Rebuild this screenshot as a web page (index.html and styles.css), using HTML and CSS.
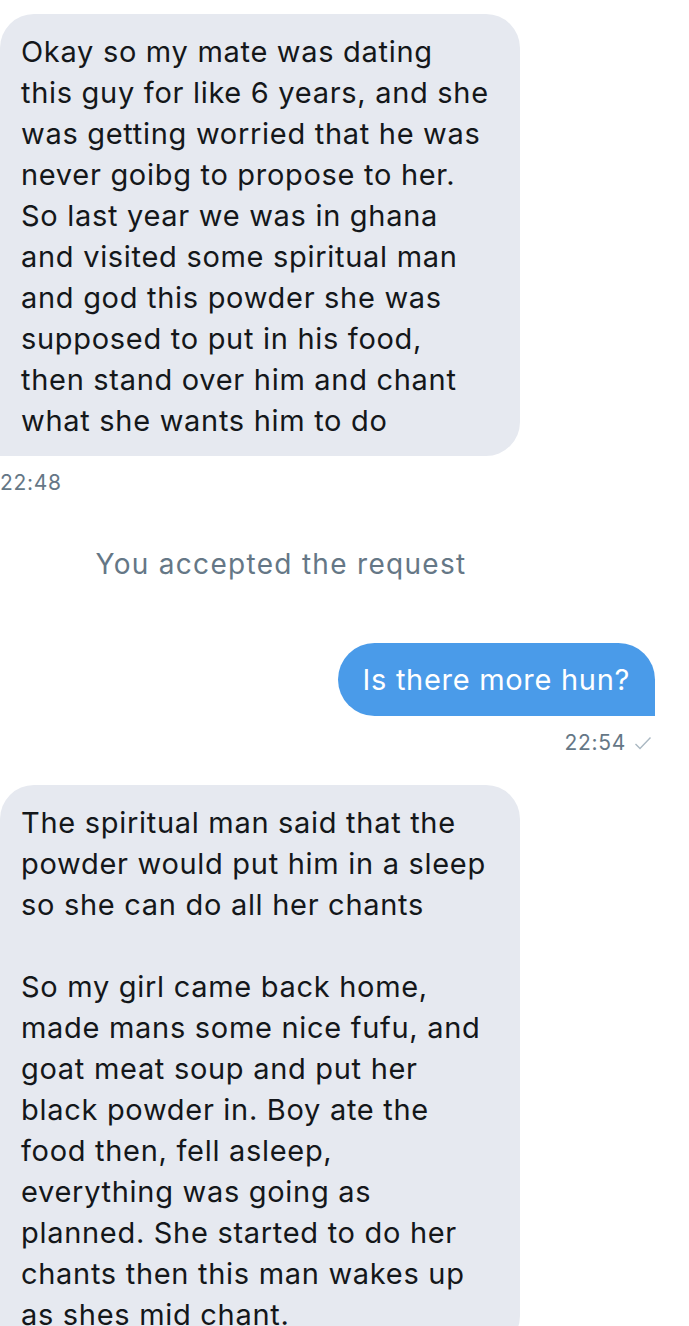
FILE: index.html
```html
<!DOCTYPE html>
<html>
<head>
<meta charset="utf-8">
<link rel="stylesheet" href="styles.css">
</head>
<body>
<div class="chat">
  <div class="msg in">
    <div class="bubble">Okay so my mate was dating<br>this guy for like 6 years, and she<br>was getting worried that he was<br>never goibg to propose to her.<br>So last year we was in ghana<br>and visited some spiritual man<br>and god this powder she was<br>supposed to put in his food,<br>then stand over him and chant<br>what she wants him to do</div>
    <div class="time">22:48</div>
  </div>
  <div class="system">You accepted the request</div>
  <div class="msg out">
    <div class="bubble">Is there more hun?</div>
    <div class="time">22:54 <svg class="check" width="18" height="14" viewBox="0 0 18 14"><path d="M1.5 8 L6 12.5 L16.5 1.5" fill="none" stroke="#aab8c2" stroke-width="1.4"/></svg></div>
  </div>
  <div class="msg in second">
    <div class="bubble">The spiritual man said that the<br>powder would put him in a sleep<br>so she can do all her chants<br><br>So my girl came back home,<br>made mans some nice fufu, and<br>goat meat soup and put her<br>black powder in. Boy ate the<br>food then, fell asleep,<br>everything was going as<br>planned. She started to do her<br>chants then this man wakes up<br>as shes mid chant.</div>
  </div>
</div>
</body>
</html>
```
FILE: styles.css
```css
html, body {
  margin: 0;
  padding: 0;
  background: #ffffff;
}
body {
  font-family: Inter, "Open Sans", "Liberation Sans", sans-serif;
  color: #14171a;
  overflow: hidden;
}
.chat {
  padding-top: 14px;
  display: flex;
  flex-direction: column;
}
.msg {
  display: flex;
  flex-direction: column;
}
.msg.in {
  align-items: flex-start;
}
.msg.out {
  align-items: flex-end;
  margin-top: 62px;
  padding-right: 34px;
}
.bubble {
  font-size: 29px;
  line-height: 41px;
  letter-spacing: 0.7px;
  white-space: nowrap;
}
.in .bubble {
  background: #e6e9f0;
  width: 520px;
  box-sizing: border-box;
  padding: 17px 10px 15px 21px;
  border-radius: 34px 34px 34px 0;
  color: #14171a;
}
.out .bubble {
  background: #4a9be9;
  color: #ffffff;
  padding: 16px 25px;
  border-radius: 37px 37px 0 37px;
}
.time {
  font-size: 21px;
  line-height: 26px;
  letter-spacing: 0.7px;
  color: #657786;
  margin-top: 14px;
  display: flex;
  align-items: center;
  gap: 8px;
}
.out .time {
  padding-right: 3px;
}
.check {
  display: block;
}
.system {
  width: 562px;
  text-align: center;
  margin-top: 51px;
  font-size: 28px;
  line-height: 34px;
  letter-spacing: 1.3px;
  color: #657786;
}
.msg.second {
  margin-top: 29px;
}
```
